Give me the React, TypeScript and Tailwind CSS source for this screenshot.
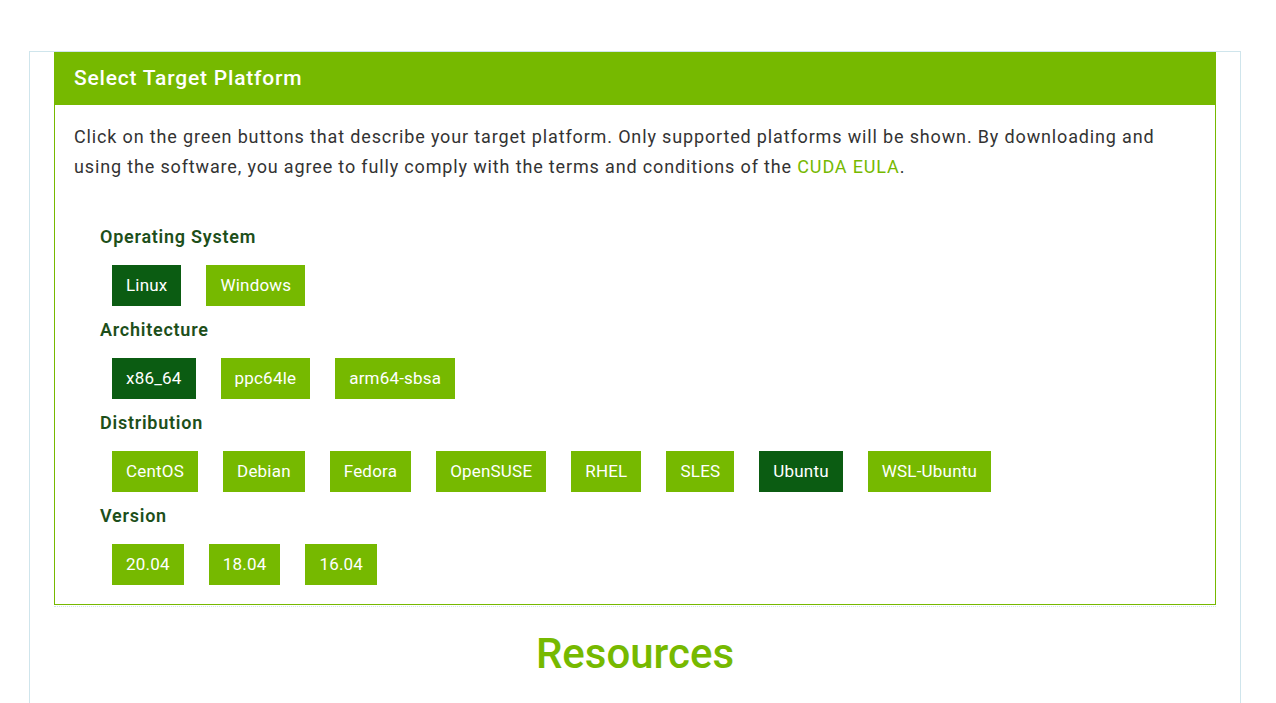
import React from 'react';

interface OptionRow {
  label: string;
  options: string[];
  selected: string;
}

const rows: OptionRow[] = [
  { label: 'Operating System', options: ['Linux', 'Windows'], selected: 'Linux' },
  { label: 'Architecture', options: ['x86_64', 'ppc64le', 'arm64-sbsa'], selected: 'x86_64' },
  {
    label: 'Distribution',
    options: ['CentOS', 'Debian', 'Fedora', 'OpenSUSE', 'RHEL', 'SLES', 'Ubuntu', 'WSL-Ubuntu'],
    selected: 'Ubuntu',
  },
  { label: 'Version', options: ['20.04', '18.04', '16.04'], selected: '' },
];

const PlatformRow: React.FC<{ row: OptionRow }> = ({ row }) => (
  <div className="pt-[12px] first:pt-0">
    <div className="text-[18px] leading-[24px] font-semibold text-[#1d4f1a] tracking-[0.75px]">{row.label}</div>
    <div className="flex gap-[25px] pl-[12px] pt-[16px]">
      {row.options.map((opt) => (
        <button
          key={opt}
          className={
            'h-[41px] px-[14px] text-[17px] text-white leading-none tracking-[0.2px] ' +
            (opt === row.selected ? 'bg-[#0b5c12]' : 'bg-[#76b900]')
          }
        >
          {opt}
        </button>
      ))}
    </div>
  </div>
);

export default function App() {
  return (
    <div className="min-h-[703px] bg-white font-['Roboto',sans-serif] pt-[51px]">
      <div className="ml-[29px] w-[1212px] min-h-[652px] border-x border-t border-[#cfe5ec] px-[24px]">
        <div className="border border-[#76b900]">
          <div className="h-[52px] bg-[#76b900] px-[19px] flex items-center text-white text-[21px] font-medium tracking-[0.8px]">
            Select Target Platform
          </div>
          <div className="px-[19px] pt-[17px] pb-[19px]">
            <p className="text-[18px] leading-[30px] text-[#333333] tracking-[0.85px]">
              Click on the green buttons that describe your target platform. Only supported platforms will be shown.
              By downloading and using the software, you agree to fully comply with the terms and conditions of the{' '}
              <a className="text-[#76b900]">CUDA EULA</a>.
            </p>
            <div className="pl-[26px] pt-[43px]">
              {rows.map((row) => (
                <PlatformRow key={row.label} row={row} />
              ))}
            </div>
          </div>
        </div>
        <div className="mt-[1px] border-b border-dotted border-[#cfe5ec]" />
        <h2 className="pt-[22px] text-center text-[42px] leading-[50px] font-medium text-[#76b900]">Resources</h2>
      </div>
    </div>
  );
}
